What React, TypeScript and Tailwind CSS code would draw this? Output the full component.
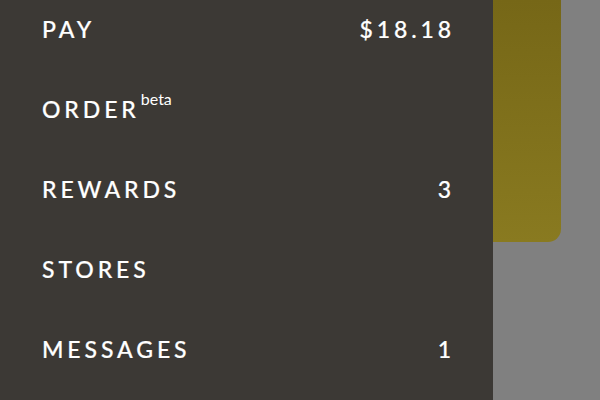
import React from "react";

const rows: { label: string; value?: string; beta?: boolean }[] = [
  { label: "PAY", value: "$18.18" },
  { label: "ORDER", beta: true },
  { label: "REWARDS", value: "3" },
  { label: "STORES" },
  { label: "MESSAGES", value: "1" },
];

export default function App() {
  return (
    <div
      className="w-[600px] h-[400px] overflow-hidden flex bg-[#808080]"
      style={{ fontFamily: "Lato, 'Open Sans', sans-serif" }}
    >
      <div className="w-[493px] h-full bg-[#3c3935] shrink-0 overflow-hidden">
        <div className="-mt-[11px] pl-[42px] pr-[42px]">
          {rows.map((r) => (
            <div key={r.label} className="h-[80px] flex items-center justify-between text-white">
              <div className="flex items-start">
                <span className="text-[23px] font-medium tracking-[0.17em] leading-none [-webkit-text-stroke:0.2px_white]">{r.label}</span>
                {r.beta && (
                  <span className="text-[16px] font-normal leading-none -mt-[7px] ml-[1px]">beta</span>
                )}
              </div>
              {r.value && (
                <span className="text-[23px] font-medium tracking-[0.17em] leading-none -mr-[4px] [-webkit-text-stroke:0.2px_white]">{r.value}</span>
              )}
            </div>
          ))}
        </div>
      </div>
      <div className="w-[68px] h-[242px] rounded-br-[13px] bg-gradient-to-b from-[#766717] to-[#897a20] shrink-0" />
    </div>
  );
}
